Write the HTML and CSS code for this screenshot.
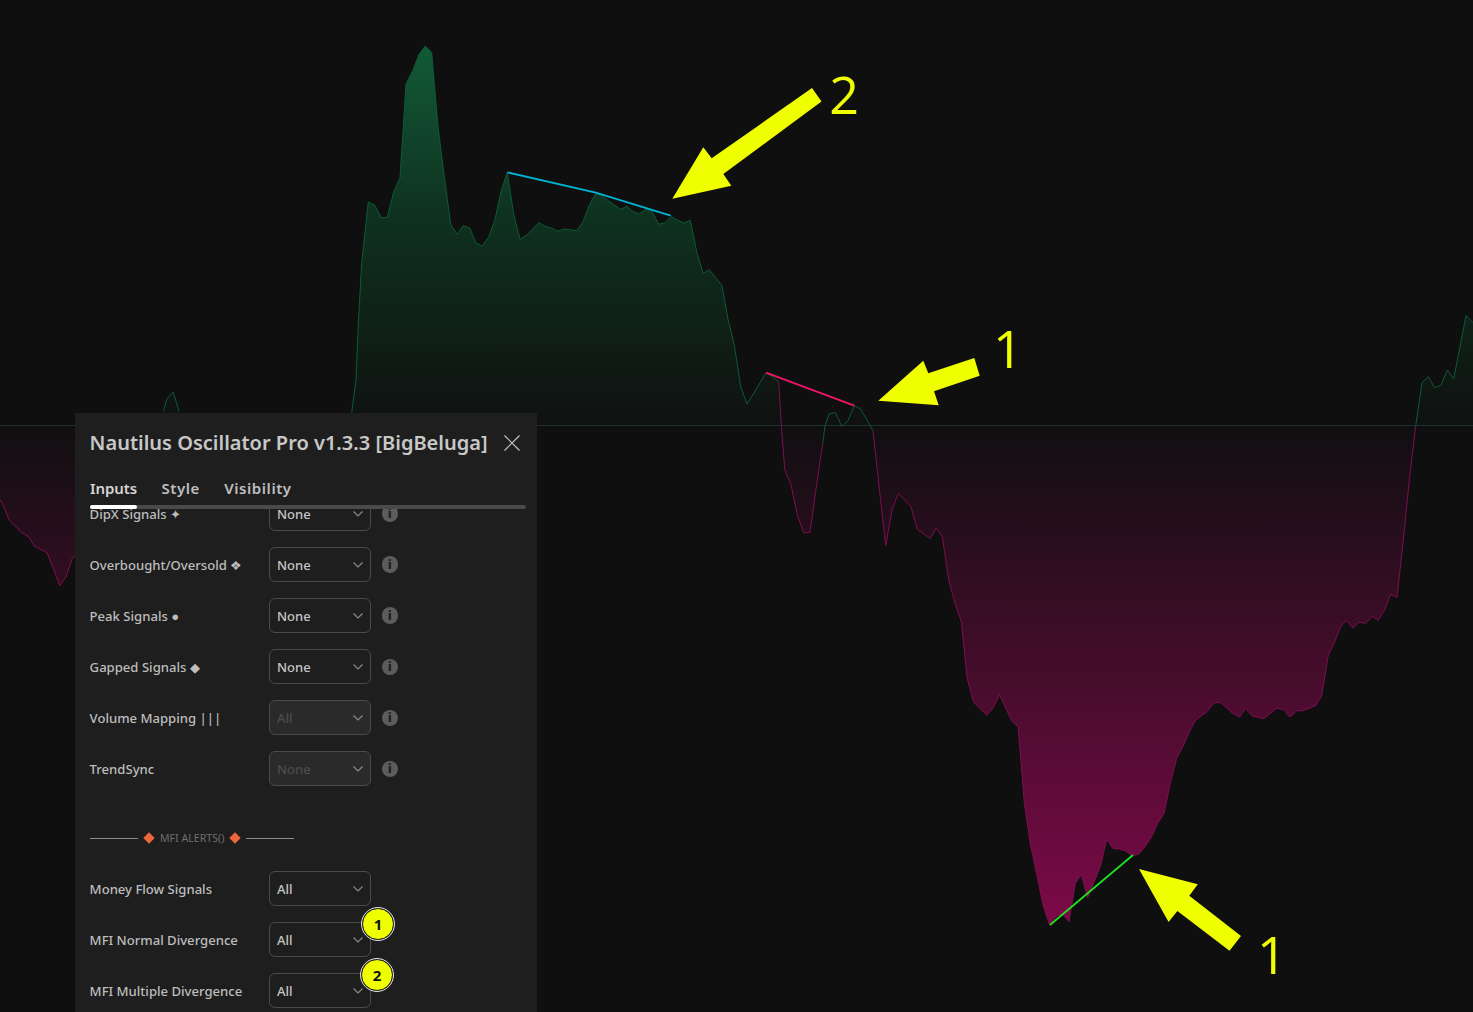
FILE: index.html
```html
<!DOCTYPE html>
<html lang="en">
<head>
<meta charset="utf-8">
<title>Nautilus Oscillator Pro</title>
<link rel="stylesheet" href="styles.css">
</head>
<body>
<main class="stage">
  <svg class="chart" viewBox="0 0 1473 1012" width="1473" height="1012" aria-hidden="true">
    <defs>
      <linearGradient id="gGreen" gradientUnits="userSpaceOnUse" x1="0" y1="46" x2="0" y2="426">
        <stop offset="0" stop-color="#125a36"/>
        <stop offset="0.45" stop-color="#0f3120"/>
        <stop offset="1" stop-color="#0f1110"/>
      </linearGradient>
      <linearGradient id="gPink" gradientUnits="userSpaceOnUse" x1="0" y1="426" x2="0" y2="925">
        <stop offset="0" stop-color="#100f10"/>
        <stop offset="1" stop-color="#7c0a48"/>
      </linearGradient>
    </defs>
    <!-- pink fills -->
    <polygon class="fill-pink" points="0,426 0,500 2.7,504 9,519.7 21.7,532.7 28,536 34.3,546 47,552.7 53.3,568.3 59.7,585.7 66,576.7 72.3,558.3 80,552 80,426"/>
    <polygon class="fill-pink" points="781.3,426 784.7,469.3 791,485 797.3,515 803.7,532.7 810,532.7 816.3,486.7 822.7,443.3 825,426"/>
    <polygon class="fill-pink" points="870,426 873,430.7 879.3,488.3 885.7,545.7 892,510 898.3,493.3 911,506.7 917.3,529.3 930,538.3 936.3,528 942.3,536.7 948.7,580 955,603.3 961.4,621.7 967.2,678.3 973.7,702.3 986.9,715.3 993.4,707.3 999.5,694.7 1011.8,721 1018.2,727 1024.4,803.3 1030.5,845 1036.9,875 1043,905 1049.5,925 1056,916.7 1062.4,913.7 1068.9,921.7 1075.4,883.3 1081.2,874.3 1087.6,897.7 1100.5,866 1106.7,839.3 1113.1,848.7 1119.6,849 1125.7,851 1132.2,855.7 1138.6,854.3 1145.1,846.7 1151.6,836.7 1157.7,823.3 1164.1,813.3 1170.6,781.7 1176.7,758.3 1183.2,746 1189.3,731.7 1195.8,720 1207,711.7 1214.1,703 1220.6,702.3 1232.5,713.3 1239.7,717 1245.4,708.3 1252.2,716 1264.1,718.7 1276.7,708.3 1283.5,709.7 1290,717 1296.5,711 1302.9,710.7 1315.5,705.7 1321.6,696 1328.1,656 1334.6,641.7 1340.7,626.7 1346.5,620.3 1353,628 1359,622 1365.5,623.3 1372,616.3 1378.1,620.3 1384.6,610 1390.7,594.3 1397,597.3 1403.3,540 1409.7,476.7 1415.7,426"/>
    <!-- green fills -->
    <polygon class="fill-green" points="163.3,426 163.3,411.7 166.7,399.3 173,392 179.3,411.7 182,426"/>
    <polygon class="fill-green" points="350,426 351.7,412.7 356,380 358.3,323 361.7,263 368.3,202 374.7,205 381.3,218 387.3,217 393.7,192 400,178 406,84 412.7,70.7 419,54.3 425.3,46 431.7,52.3 438,126.7 444.3,176.7 450.7,224.3 457,234.3 463.3,225.7 469.7,228 476,243 482.3,246 488.7,237 494.7,220.7 501,191.7 507.3,172.3 513.7,214.3 520,239.3 526.3,235.3 539,222.7 545.3,226.3 551.3,228 557.7,231.3 564,229 576.7,230.7 583,221.7 589.3,205.3 595.7,193.3 602,195.7 608.3,200.7 620.7,209.3 627,206.3 633.3,211.7 639.7,213.7 646,209.3 652.3,211.7 658.7,224.3 665,222.7 671.3,216.7 677.7,220.3 684,223 690.3,220.3 696.7,251.7 703,273.3 709.3,269.7 722,285.7 728,319.3 734.3,345 740.7,386.7 747,404 753.3,394 766,372.7 772.3,376.7 778.7,381.7 781.3,426"/>
    <polygon class="fill-green" points="825,426 829,414 835.3,412.3 841.7,426.3 848,420.7 854.3,405.7 860.7,409 870,426"/>
    <polygon class="fill-green" points="1415.7,426 1422,382.7 1428.3,376.7 1434.7,387.7 1441,385 1447.3,370 1453.7,378.7 1460,346.7 1466,315.3 1473,322.7 1473,426"/>
    <line class="zero" x1="0" y1="425.5" x2="1473" y2="425.5"/>
    <!-- outlines -->
    <polyline class="line-pink" points="0,500 2.7,504 9,519.7 21.7,532.7 28,536 34.3,546 47,552.7 53.3,568.3 59.7,585.7 66,576.7 72.3,558.3 80,552"/>
    <polyline class="line-green" points="163.3,411.7 166.7,399.3 173,392 179.3,411.7"/>
    <polyline class="line-green" points="351.7,412.7 356,380 358.3,323 361.7,263 368.3,202 374.7,205 381.3,218 387.3,217 393.7,192 400,178 406,84 412.7,70.7 419,54.3 425.3,46 431.7,52.3 438,126.7 444.3,176.7 450.7,224.3 457,234.3 463.3,225.7 469.7,228 476,243 482.3,246 488.7,237 494.7,220.7 501,191.7 507.3,172.3 513.7,214.3 520,239.3 526.3,235.3 539,222.7 545.3,226.3 551.3,228 557.7,231.3 564,229 576.7,230.7 583,221.7 589.3,205.3 595.7,193.3 602,195.7 608.3,200.7 620.7,209.3 627,206.3 633.3,211.7 639.7,213.7 646,209.3 652.3,211.7 658.7,224.3 665,222.7 671.3,216.7 677.7,220.3 684,223 690.3,220.3 696.7,251.7 703,273.3 709.3,269.7 722,285.7 728,319.3 734.3,345 740.7,386.7 747,404 753.3,394 766,372.7 772.3,376.7 778.7,381.7"/>
    <polyline class="line-pink" points="778.7,381.7 781.3,425 784.7,469.3 791,485 797.3,515 803.7,532.7 810,532.7 816.3,486.7 822.7,443.3"/>
    <polyline class="line-green" points="822.7,443.3 825,426 829,414 835.3,412.3 841.7,426.3 848,420.7 854.3,405.7 860.7,409 873,430.7"/>
    <polyline class="line-pink" points="873,430.7 879.3,488.3 885.7,545.7 892,510 898.3,493.3 911,506.7 917.3,529.3 930,538.3 936.3,528 942.3,536.7 948.7,580 955,603.3 961.4,621.7 967.2,678.3 973.7,702.3 986.9,715.3 993.4,707.3 999.5,694.7 1011.8,721 1018.2,727 1024.4,803.3 1030.5,845 1036.9,875 1043,905 1049.5,925 1056,916.7 1062.4,913.7 1068.9,921.7 1075.4,883.3 1081.2,874.3 1087.6,897.7 1100.5,866 1106.7,839.3 1113.1,848.7 1119.6,849 1125.7,851 1132.2,855.7 1138.6,854.3 1145.1,846.7 1151.6,836.7 1157.7,823.3 1164.1,813.3 1170.6,781.7 1176.7,758.3 1183.2,746 1189.3,731.7 1195.8,720 1207,711.7 1214.1,703 1220.6,702.3 1232.5,713.3 1239.7,717 1245.4,708.3 1252.2,716 1264.1,718.7 1276.7,708.3 1283.5,709.7 1290,717 1296.5,711 1302.9,710.7 1315.5,705.7 1321.6,696 1328.1,656 1334.6,641.7 1340.7,626.7 1346.5,620.3 1353,628 1359,622 1365.5,623.3 1372,616.3 1378.1,620.3 1384.6,610 1390.7,594.3 1397,597.3 1403.3,540 1409.7,476.7 1415.7,426"/>
    <polyline class="line-green" points="1415.7,426 1422,382.7 1428.3,376.7 1434.7,387.7 1441,385 1447.3,370 1453.7,378.7 1460,346.7 1466,315.3 1473,322.7"/>
    <!-- divergence lines -->
    <polyline class="div div-cyan" points="507.3,172.3 595.7,192.7 670.7,215.7"/>
    <line class="div div-pink" x1="766" y1="372.7" x2="854.3" y2="405.7"/>
    <line class="div div-green" x1="1050" y1="925" x2="1133" y2="855"/>
    <!-- arrows -->
    <polygon class="arrow" points="672.3,198.7 703.3,147.3 711.7,158.3 812,88 821.5,101.5 723.3,174 731.3,185.7"/>
    <polygon class="arrow" points="878.3,400.7 923.3,360.7 928.3,373.3 974.3,358 979.7,375.7 934,391.3 938.7,405.3"/>
    <polygon class="arrow" points="1139,869 1197.8,884.3 1189.3,895.7 1241,936 1229.5,950.7 1177.4,911 1168.6,922"/>
    <text class="mark" x="829.3" y="114">2</text>
    <text class="mark" x="993" y="368">1</text>
    <text class="mark" x="1257" y="974">1</text>
  </svg>

  <section class="panel">
    <header class="panel-head">
      <h1 class="panel-title">Nautilus Oscillator Pro v1.3.3 [BigBeluga]</h1>
      <svg class="close" viewBox="0 0 18 18" width="18" height="18" aria-hidden="true"><path d="M1.5 1.5l15 15M16.5 1.5l-15 15"/></svg>
    </header>
    <nav class="tabs">
      <span class="tab tab-active">Inputs</span>
      <span class="tab tab-style">Style</span>
      <span class="tab tab-vis">Visibility</span>
    </nav>
    <div class="tab-track"><span class="tab-thumb"></span></div>
    <div class="scroller">
      <div class="scroll-inner">
        <div class="row"><span class="label">DipX Signals ✦</span><span class="select">None<svg class="chev" viewBox="0 0 10 6"><path d="M.5.5L5 5 9.5.5"/></svg></span><span class="info">i</span></div>
        <div class="row"><span class="label">Overbought/Oversold ❖</span><span class="select">None<svg class="chev" viewBox="0 0 10 6"><path d="M.5.5L5 5 9.5.5"/></svg></span><span class="info">i</span></div>
        <div class="row"><span class="label">Peak Signals ●</span><span class="select">None<svg class="chev" viewBox="0 0 10 6"><path d="M.5.5L5 5 9.5.5"/></svg></span><span class="info">i</span></div>
        <div class="row"><span class="label">Gapped Signals ◆</span><span class="select">None<svg class="chev" viewBox="0 0 10 6"><path d="M.5.5L5 5 9.5.5"/></svg></span><span class="info">i</span></div>
        <div class="row"><span class="label">Volume Mapping |||</span><span class="select select-off">All<svg class="chev" viewBox="0 0 10 6"><path d="M.5.5L5 5 9.5.5"/></svg></span><span class="info">i</span></div>
        <div class="row"><span class="label">TrendSync</span><span class="select select-off">None<svg class="chev" viewBox="0 0 10 6"><path d="M.5.5L5 5 9.5.5"/></svg></span><span class="info">i</span></div>
        <div class="group-title"><span class="rule"></span><span class="gem"></span><span class="group-name">MFI ALERTS()</span><span class="gem"></span><span class="rule"></span></div>
        <div class="row"><span class="label">Money Flow Signals</span><span class="select">All<svg class="chev" viewBox="0 0 10 6"><path d="M.5.5L5 5 9.5.5"/></svg></span></div>
        <div class="row"><span class="label">MFI Normal Divergence</span><span class="select">All<svg class="chev" viewBox="0 0 10 6"><path d="M.5.5L5 5 9.5.5"/></svg><b class="badge badge-one">1</b></span></div>
        <div class="row"><span class="label">MFI Multiple Divergence</span><span class="select">All<svg class="chev" viewBox="0 0 10 6"><path d="M.5.5L5 5 9.5.5"/></svg><b class="badge badge-two">2</b></span></div>
      </div>
    </div>
  </section>
</main>
</body>
</html>
```
FILE: styles.css
```css
* { box-sizing: border-box; }
html, body { margin: 0; height: 100%; }
body { background: #0f0f0f; overflow: hidden; font-family: "Noto Sans", "Open Sans", sans-serif; }
.stage { position: relative; width: 1473px; height: 1012px; overflow: hidden; background: #0f0f0f; }
.chart { position: absolute; left: 0; top: 0; display: block; }
.zero { stroke: #1c3031; stroke-width: 1; }
.fill-green { fill: url(#gGreen); }
.fill-pink { fill: url(#gPink); }
.line-green, .line-pink { fill: none; stroke-width: 1; stroke-linejoin: round; }
.line-green { stroke: #0c5a36; }
.line-pink { stroke: #7e0e50; }
.div { fill: none; stroke-width: 1.8; }
.div-cyan { stroke: #00b4d2; }
.div-pink { stroke: #f0146a; }
.div-green { stroke: #1ee01e; }
.arrow { fill: #f0ff00; }
.mark { fill: #f0ff00; font-family: "Open Sans", sans-serif; font-size: 52px; font-weight: 400; }

.panel { position: absolute; left: 75px; top: 413px; width: 462px; height: 599px; background: #1e1e1e; color: #c4c4c4; display: flex; flex-direction: column; overflow: hidden; }
.panel-head { display: flex; align-items: center; justify-content: space-between; height: 59px; padding: 0 16px 0 14.6px; }
.panel-title { margin: 0; font-size: 20px; font-weight: 600; color: #c8c8c8; white-space: nowrap; }
.close { fill: none; stroke: #c4c4c4; stroke-width: 1.2; }
.tabs { display: flex; gap: 24.5px; padding: 0 15px 2px; height: 33px; align-items: center; }
.tab { font-size: 15px; font-weight: 600; color: #bfbfbf; }
.tab-active { color: #d4d4d4; letter-spacing: -0.1px; }
.tab-style { letter-spacing: 0.55px; }
.tab-vis { letter-spacing: 0.55px; }
.tab-track { height: 4px; margin: 0 11px 0 15px; background: #4a4a4a; border-radius: 2px; flex: none; }
.tab-thumb { display: block; width: 47px; height: 4px; background: #fff; border-radius: 2px; }
.scroller { flex: 1; overflow: hidden; }
.scroll-inner { margin-top: -13px; padding-left: 15px; display: flex; flex-direction: column; }
.row { display: flex; align-items: center; height: 35px; margin-bottom: 16.1px; flex: none; }
.label { width: 179px; font-size: 13.1px; font-weight: 500; color: #bdbdbd; white-space: nowrap; margin-left: -0.4px; margin-right: 0.4px; }
.select { position: relative; width: 102px; height: 35px; border: 1px solid #4a4a4a; border-radius: 6px; display: flex; align-items: center; padding: 0 7px; font-size: 13px; font-weight: 500; color: #c4c4c4; }
.select-off { color: #4c4c4c; background: #2a2a2a; }
.chev { position: absolute; right: 7px; top: 14px; width: 10px; height: 6px; fill: none; stroke: #8a8a8a; stroke-width: 1.2; }
.info { width: 16.5px; height: 16.5px; margin-left: 10.5px; border-radius: 50%; background: #5c5c5c; color: #1e1e1e; font-size: 13px; font-weight: 800; display: flex; align-items: center; justify-content: center; line-height: 1; }
.group-title { display: flex; align-items: center; gap: 6px; height: 16px; margin: 27.5px 0 25px; font-size: 10.6px; color: #6e6e6e; }
.rule { width: 48px; height: 1px; background: #8c8c8c; }
.gem { width: 8px; height: 8px; background: #f0663c; transform: rotate(45deg); margin: 0 1px; }
.group-name { white-space: nowrap; }
.badge { position: absolute; width: 32px; height: 32px; border-radius: 50%; background: #f0ff00; border: 1.5px solid #1a1a1a; outline: 1px solid #e0e0e0; color: #111; font-size: 15px; font-weight: 700; display: flex; align-items: center; justify-content: center; }
.badge-one { left: 92px; top: -15px; }
.badge-two { left: 91px; top: -15px; }
```
